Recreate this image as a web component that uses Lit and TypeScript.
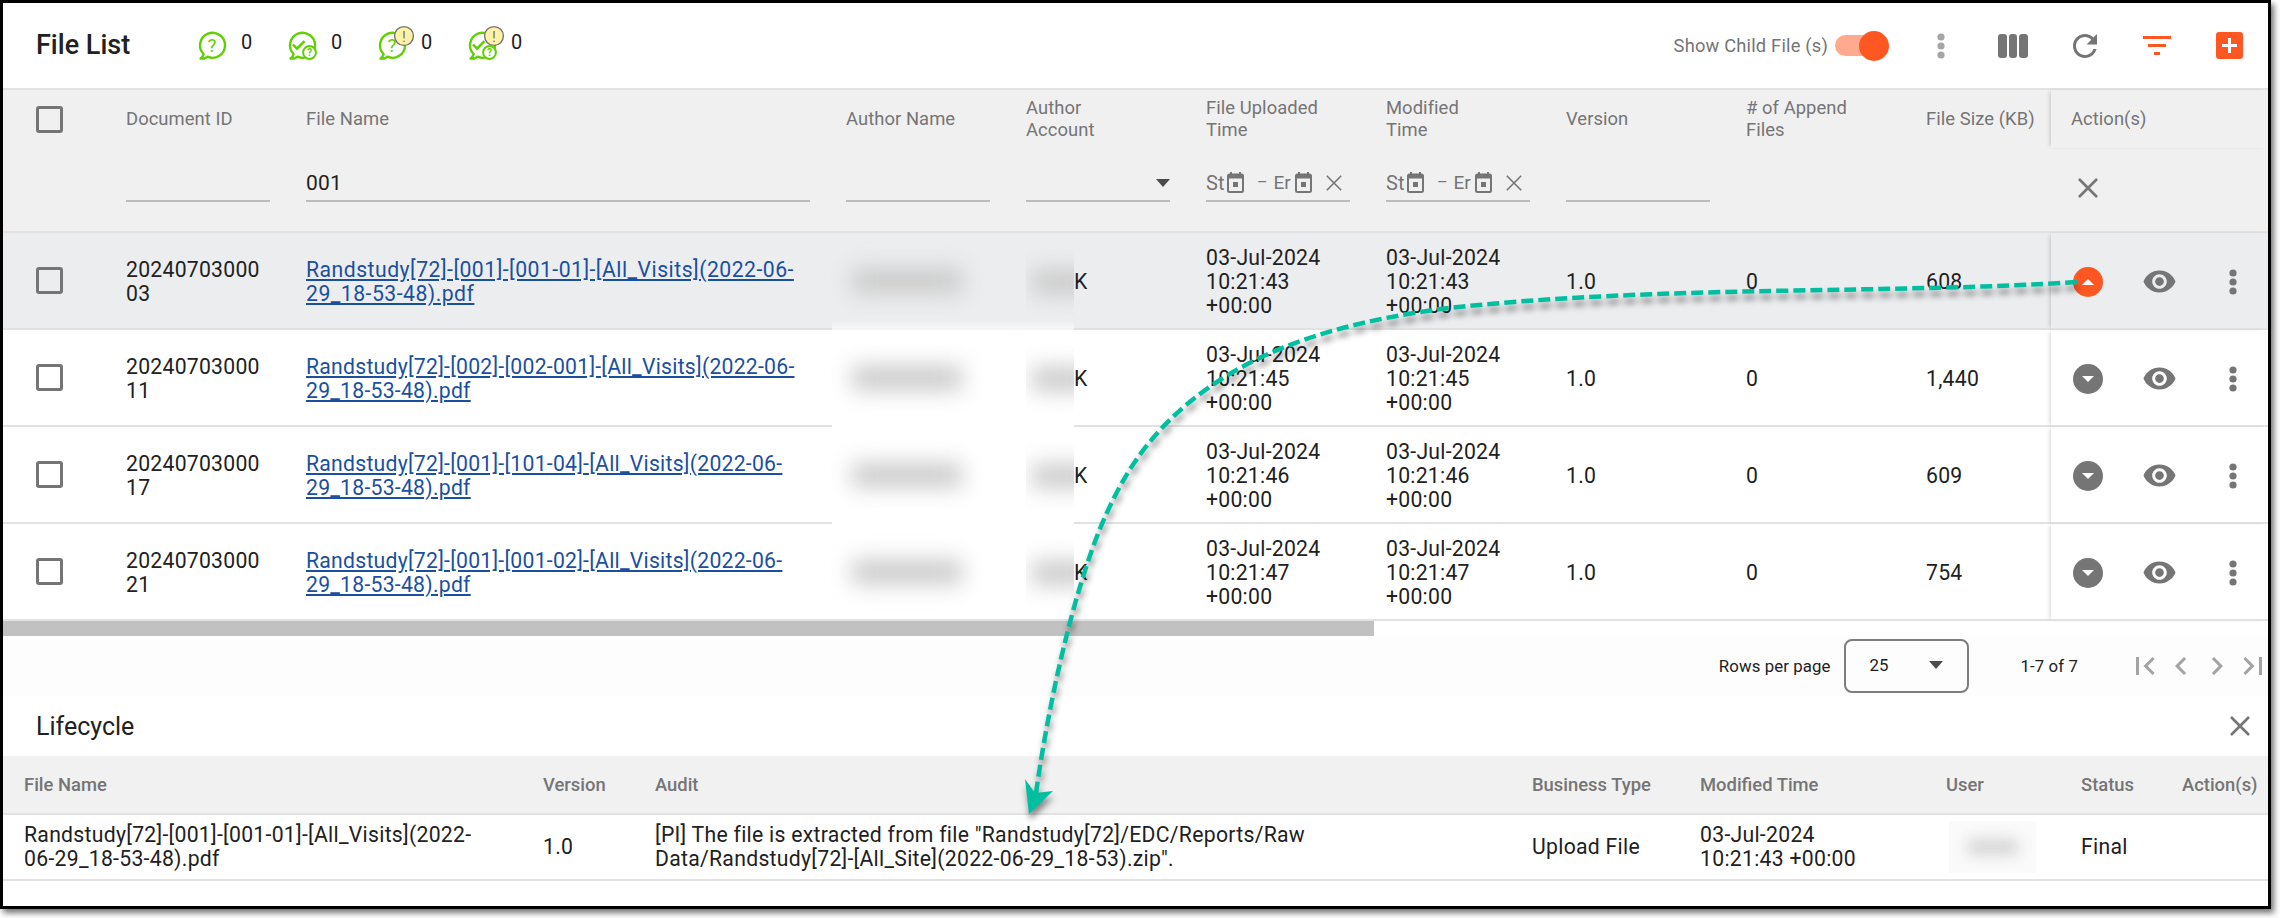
import { LitElement, html, svg, css } from "lit";
import { customElement } from "lit/decorators.js";

const GREEN = "#5fd000";

const PATHS = {
  refresh:
    "M17.65 6.35C16.2 4.9 14.21 4 12 4c-4.42 0-7.99 3.58-7.99 8s3.57 8 7.99 8c3.73 0 6.84-2.55 7.73-6h-2.08c-.82 2.33-3.04 4-5.65 4-3.31 0-6-2.69-6-6s2.69-6 6-6c1.66 0 3.14.69 4.22 1.78L13 11h7V4l-2.35 2.35z",
  eye: "M12 4.5C7 4.5 2.73 7.61 1 12c1.73 4.39 6 7.5 11 7.5s9.27-3.11 11-7.5c-1.73-4.39-6-7.5-11-7.5zM12 17c-2.76 0-5-2.24-5-5s2.24-5 5-5 5 2.24 5 5-2.24 5-5 5zm0-8c-1.66 0-3 1.34-3 3s1.34 3 3 3 3-1.34 3-3-1.34-3-3-3z",
  first: "M18.41 16.59L13.82 12l4.59-4.59L17 6l-6 6 6 6zM6 6h2v12H6z",
  prev: "M15.41 7.41L14 6l-6 6 6 6 1.41-1.41L10.83 12z",
  next: "M10 6L8.59 7.41 13.17 12l-4.58 4.59L10 18l6-6z",
  last: "M5.59 7.41L10.18 12l-4.59 4.59L7 18l6-6-6-6zM16 6h2v12h-2z",
};

const mat = (d: string, size: number, fill = "#757575") => html`
  <svg width=${size} height=${size} viewBox="0 0 24 24"><path d=${d} fill=${fill}></path></svg>
`;

// chat bubble with the question mark, optional check + small ? and warning badge
const bubble = (checked: boolean, warn: boolean) => html`
  <svg class="bubble" width="32" height="32" viewBox="0 0 32 32">
    <path
      d="M7.6 24A12.5 12.5 0 1 1 11.5 26.7L8.5 28.5H4.5Q7 27 7.6 24Z"
      fill="#fff"
      stroke=${GREEN}
      stroke-width="2.4"
      stroke-linejoin="round"
    ></path>
    ${checked
      ? svg`
        <path d="M7 14.5l4 4.2 7.5-7.5" fill="none" stroke=${GREEN} stroke-width="2.5"></path>
        <circle cx="23.5" cy="22.5" r="6.4" fill="#fff" stroke=${GREEN} stroke-width="2"></circle>
        <text x="23.5" y="26.3" font-size="10.5" font-weight="700" text-anchor="middle" fill=${GREEN} font-family="Roboto">?</text>`
      : svg`<text x="16" y="22" font-size="19" text-anchor="middle" fill=${GREEN} font-family="Roboto">?</text>`}
    ${warn
      ? svg`
        <circle cx="28" cy="6" r="9.4" fill="#fff2a6" stroke="#757575" stroke-width="1.4"></circle>
        <text x="28" y="11.5" font-size="15" text-anchor="middle" fill="#757575" font-family="Roboto">!</text>`
      : ""}
  </svg>
`;

const calendar = html`
  <svg class="cal" width="17" height="21" viewBox="0 0 17 21">
    <path d="M4 0v3M13 0v3" stroke="#757575" stroke-width="2"></path>
    <rect x="1" y="2.5" width="15" height="17.5" rx="1.5" fill="none" stroke="#757575" stroke-width="2"></rect>
    <rect x="1" y="2.5" width="15" height="4" fill="#757575"></rect>
    <rect x="6" y="10" width="5" height="5" fill="#757575"></rect>
  </svg>
`;

const cross = (size: number, width = 2.4) => html`
  <svg width=${size} height=${size} viewBox="0 0 20 20">
    <path d="M1 1L19 19M19 1L1 19" stroke="#757575" stroke-width=${width} fill="none"></path>
  </svg>
`;

const dots = (fill: string) => html`
  <svg width="8" height="26" viewBox="0 0 8 26">
    <circle cx="4" cy="4" r="3.6" fill=${fill}></circle>
    <circle cx="4" cy="13" r="3.6" fill=${fill}></circle>
    <circle cx="4" cy="22" r="3.6" fill=${fill}></circle>
  </svg>
`;

const FILES = [
  { id: "2024070300003", name: "Randstudy[72]-[001]-[001-01]-[All_Visits](2022-06-29_18-53-48).pdf", time: "10:21:43", size: "608" },
  { id: "2024070300011", name: "Randstudy[72]-[002]-[002-001]-[All_Visits](2022-06-29_18-53-48).pdf", time: "10:21:45", size: "1,440" },
  { id: "2024070300017", name: "Randstudy[72]-[001]-[101-04]-[All_Visits](2022-06-29_18-53-48).pdf", time: "10:21:46", size: "609" },
  { id: "2024070300021", name: "Randstudy[72]-[001]-[001-02]-[All_Visits](2022-06-29_18-53-48).pdf", time: "10:21:47", size: "754" },
];

@customElement("app-root")
export class AppRoot extends LitElement {
  static styles = css`
    :host {
      display: block;
      position: relative;
      width: 2280px;
      height: 918px;
      background: #fff;
      font-family: Roboto, "Liberation Sans", sans-serif;
      color: #212121;
      overflow: hidden;
    }

    .frame {
      width: 2271px;
      height: 909px;
      box-sizing: border-box;
      border: 3px solid #000;
      background: #fff;
      box-shadow: 3px 4px 6px rgba(0, 0, 0, 0.55);
      display: flex;
      flex-direction: column;
      position: relative;
      overflow: hidden;
    }

    /* Top bar */

    .topbar {
      height: 87px;
      box-sizing: border-box;
      border-bottom: 2px solid #e2e2e2;
      display: flex;
      align-items: center;
      padding: 0 21px 0 33px;
    }

    .title {
      width: 160px;
      font-size: 27px;
      font-weight: 500;
      position: relative;
      top: -1px;
    }

    .counter {
      width: 90px;
      display: flex;
      align-items: flex-start;
      gap: 13px;
      font-size: 20px;
      line-height: 24px;
      height: 32px;
    }

    .bubble {
      overflow: visible;
    }

    .tools {
      margin-left: auto;
      display: flex;
      align-items: center;
    }

    .child-label {
      font-size: 18.3px;
      color: #757575;
      letter-spacing: 0.2px;
      margin-right: 7px;
    }

    .toggle {
      position: relative;
      width: 54px;
      height: 21px;
      margin-right: -2px;
    }

    .toggle .track {
      width: 50px;
      height: 21px;
      border-radius: 11px;
      background: #ffa98f;
    }

    .toggle .thumb {
      position: absolute;
      right: 0;
      top: -4.5px;
      width: 30px;
      height: 30px;
      border-radius: 50%;
      background: #ff5722;
    }

    .tool {
      width: 36px;
      height: 36px;
      display: flex;
      align-items: center;
      justify-content: center;
      margin-left: 36px;
    }

    .bars {
      display: flex;
      gap: 2px;
    }

    .bars i {
      width: 8.6px;
      height: 24px;
      border-radius: 3px;
      background: #757575;
    }

    .filter-icon {
      display: flex;
      flex-direction: column;
      align-items: center;
      gap: 5px;
    }

    .filter-icon i {
      height: 3px;
      background: #ff5722;
    }

    .add {
      width: 27px;
      height: 27px;
      border-radius: 3px;
      background: #ff5722;
      display: flex;
      align-items: center;
      justify-content: center;
    }

    /* File table */

    .table {
      position: relative;
    }

    .cols {
      display: grid;
      grid-template-columns: 103px 180px 540px repeat(6, 180px) 145px 217px;
    }

    .cell {
      padding: 0 20px;
      box-sizing: border-box;
      display: flex;
      align-items: center;
      min-width: 0;
    }

    .head {
      background: #f0f0f1;
    }

    .labels .cell {
      height: 58px;
      font-size: 18.4px;
      line-height: 22px;
      letter-spacing: 0.06px;
      color: #757575;
      padding-right: 0;
      white-space: nowrap;
    }

    .filters {
      border-bottom: 2px solid #e2e2e2;
    }

    .filters .cell {
      height: 83px;
      align-items: flex-end;
      padding: 0 16px 29px 20px;
    }

    .field {
      width: 100%;
      height: 40px;
      box-sizing: border-box;
      border-bottom: 2px solid #bcbcbc;
      padding-top: 3px;
      display: flex;
      align-items: center;
      font-size: 21px;
      letter-spacing: 0.25px;
    }

    .caret {
      margin-left: auto;
      width: 0;
      height: 0;
      border-left: 7.5px solid transparent;
      border-right: 7.5px solid transparent;
      border-top: 8px solid #4a4a4a;
    }

    .date {
      font-size: 20px;
      color: #757575;
      letter-spacing: 0;
    }

    .date-part {
      display: block;
      white-space: nowrap;
      width: 21px;
    }

    .date-part.end {
      width: 18px;
      margin-right: 2px;
      font-size: 19px;
    }

    .date .x {
      margin-left: auto;
      display: flex;
      margin-right: 8px;
    }

    .dash {
      margin: 0 6px 0 13px;
      font-size: 16px;
    }

    .checkbox {
      width: 27px;
      height: 27px;
      box-sizing: border-box;
      border: 3px solid #757575;
      border-radius: 3px;
    }

    .check-cell {
      padding-left: 33px;
    }

    .row {
      height: 97px;
      box-sizing: border-box;
      border-bottom: 2px solid #e2e2e2;
      font-size: 21.2px;
      line-height: 24.2px;
      letter-spacing: 0.25px;
    }

    .row.active {
      background: #ecedef;
    }

    .row .cell {
      height: 95px;
    }

    .row .text {
      padding-top: 3px;
    }

    .wrap-id {
      word-break: break-all;
    }

    a {
      color: #1b4f9f;
      text-decoration: underline;
    }

    .active a {
      letter-spacing: 0.48px;
    }

    .sticky {
      box-shadow: -3px 0 4px -2px rgba(0, 0, 0, 0.18);
    }

    .filters .sticky {
      box-shadow: none;
      padding-left: 27px;
      padding-bottom: 33px;
    }

    .row .sticky {
      padding: 0;
      height: 97px;
    }

    .expand {
      width: 30px;
      height: 30px;
      border-radius: 50%;
      background: #757575;
      display: flex;
      align-items: center;
      justify-content: center;
      margin-left: 22px;
    }

    .active .expand {
      background: #ff5722;
    }

    .expand i {
      width: 0;
      height: 0;
      border-left: 6px solid transparent;
      border-right: 6px solid transparent;
      border-top: 6px solid #fff;
    }

    .active .expand i {
      border-top: 0;
      border-bottom: 6px solid #fff;
    }

    .eye {
      display: flex;
      margin-left: 39px;
    }

    .more {
      display: flex;
      margin-left: 52px;
    }

    /* Redacted names */

    .patch {
      position: absolute;
      left: 829px;
      top: 230px;
      width: 242px;
      height: 274px;
      background: linear-gradient(rgba(255, 255, 255, 0), #fff 14px);
      z-index: 1;
    }

    .blur-name {
      width: 110px;
      height: 24px;
      margin-left: 6px;
      background: #c9c9c9;
      filter: blur(11px);
      position: relative;
      z-index: 2;
    }

    .account-clip {
      width: 48px;
      height: 70px;
      overflow: hidden;
      flex: none;
      position: relative;
      z-index: 2;
      display: flex;
      align-items: center;
    }

    .account-clip i {
      display: block;
      width: 60px;
      height: 24px;
      margin-left: 6px;
      flex: none;
      background: #c9c9c9;
      filter: blur(11px);
    }

    .blur-user {
      width: 87px;
      height: 52px;
      background: #fafafa;
      margin-left: 3px;
      display: flex;
      align-items: center;
      justify-content: center;
    }

    .blur-user i {
      width: 50px;
      height: 16px;
      background: #d6d6d6;
      filter: blur(7px);
    }

    /* Scrollbar and pagination */

    .scrollbar {
      height: 15px;
      background: #fff;
    }

    .scrollbar i {
      display: block;
      width: 1371px;
      height: 15px;
      background: #c1c1c1;
    }

    .pagination {
      height: 60px;
      background: #fdfdfd;
      display: flex;
      align-items: center;
      justify-content: flex-end;
      margin-right: -3px;
      font-size: 16.8px;
      letter-spacing: 0.1px;
    }

    .rows-select {
      width: 125px;
      height: 54px;
      box-sizing: border-box;
      border: 2px solid #7d7d7d;
      border-radius: 8px;
      margin: 0 52px 0 13px;
      padding: 0 24px 2px;
      display: flex;
      align-items: center;
    }

    .pager {
      display: flex;
      margin-left: 49px;
    }

    .pager svg {
      display: block;
    }

    /* Lifecycle panel */

    .lifecycle {
      flex: 1;
      background: #fff;
      border-top-left-radius: 12px;
    }

    .life-title {
      height: 60px;
      display: flex;
      align-items: center;
      justify-content: space-between;
      padding: 0 18px 0 33px;
      font-size: 25px;
    }

    .life-cols {
      display: grid;
      grid-template-columns: 519px 112px 877px 168px 246px 135px 101px 107px;
    }

    .life-head {
      height: 59px;
      background: #f1f1f1;
      border-bottom: 2px solid #e2e2e2;
      box-sizing: border-box;
      font-size: 18.4px;
      font-weight: 500;
      color: #757575;
    }

    .life-head .cell,
    .life-row .cell {
      padding: 0 0 0 21px;
    }

    .life-row {
      height: 66px;
      border-bottom: 2px solid #e2e2e2;
      box-sizing: border-box;
      font-size: 21.2px;
      line-height: 24.2px;
      letter-spacing: 0.28px;
    }

    .life-row .name {
      padding-right: 40px;
    }

    /* Annotation arrow */

    .arrow {
      position: absolute;
      left: 0;
      top: 0;
      z-index: 5;
      pointer-events: none;
      filter: drop-shadow(1px 6px 3px rgba(0, 0, 0, 0.45));
    }
  `;

  renderTopbar() {
    return html`
      <div class="topbar">
        <div class="title">File List</div>
        <div class="counter">${bubble(false, false)}<span>0</span></div>
        <div class="counter">${bubble(true, false)}<span>0</span></div>
        <div class="counter">${bubble(false, true)}<span>0</span></div>
        <div class="counter">${bubble(true, true)}<span>0</span></div>
        <div class="tools">
          <div class="child-label">Show Child File (s)</div>
          <div class="toggle"><div class="track"></div><div class="thumb"></div></div>
          <div class="tool">${dots("#a6a6a6")}</div>
          <div class="tool"><div class="bars"><i></i><i></i><i></i></div></div>
          <div class="tool">${mat(PATHS.refresh, 36)}</div>
          <div class="tool">
            <div class="filter-icon">
              <i style="width:28px"></i><i style="width:18px"></i><i style="width:6px"></i>
            </div>
          </div>
          <div class="tool">
            <div class="add">
              <svg width="15" height="15" viewBox="0 0 15 15">
                <path d="M7.5 0v15M0 7.5h15" stroke="#fff" stroke-width="3"></path>
              </svg>
            </div>
          </div>
        </div>
      </div>
    `;
  }

  renderDateFilter() {
    return html`
      <div class="field date">
        <span class="date-part">St</span>${calendar}
        <span class="dash">–</span>
        <span class="date-part end">Er</span>
        <span style="margin-left:1px;display:flex">${calendar}</span>
        <span class="x">${cross(16, 2)}</span>
      </div>
    `;
  }

  renderHead() {
    return html`
      <div class="head">
        <div class="cols labels">
          <div class="cell check-cell"><div class="checkbox"></div></div>
          <div class="cell">Document ID</div>
          <div class="cell">File Name</div>
          <div class="cell">Author Name</div>
          <div class="cell">Author<br />Account</div>
          <div class="cell">File Uploaded<br />Time</div>
          <div class="cell">Modified<br />Time</div>
          <div class="cell">Version</div>
          <div class="cell"><div># of Append<br />Files</div></div>
          <div class="cell">File Size (KB)</div>
          <div class="cell sticky">Action(s)</div>
        </div>
        <div class="cols filters">
          <div class="cell"></div>
          <div class="cell"><div class="field"></div></div>
          <div class="cell"><div class="field">001</div></div>
          <div class="cell"><div class="field"></div></div>
          <div class="cell"><div class="field"><i class="caret"></i></div></div>
          <div class="cell">${this.renderDateFilter()}</div>
          <div class="cell">${this.renderDateFilter()}</div>
          <div class="cell"><div class="field"></div></div>
          <div class="cell"></div>
          <div class="cell"></div>
          <div class="cell sticky">${cross(20, 2.6)}</div>
        </div>
      </div>
    `;
  }

  renderRow(f: (typeof FILES)[number], i: number) {
    const date = html`03-Jul-2024<br />${f.time}<br />+00:00`;
    return html`
      <div class="cols row ${i === 0 ? "active" : ""}">
        <div class="cell check-cell"><div class="checkbox"></div></div>
        <div class="cell text"><div class="wrap-id">${f.id}</div></div>
        <div class="cell text" style="padding-right:16px"><div><a href="#">${f.name}</a></div></div>
        <div class="cell"><div class="blur-name"></div></div>
        <div class="cell text"><div class="account-clip"><i></i></div><span>K</span></div>
        <div class="cell text"><div>${date}</div></div>
        <div class="cell text"><div>${date}</div></div>
        <div class="cell text">1.0</div>
        <div class="cell text">0</div>
        <div class="cell text">${f.size}</div>
        <div class="cell sticky">
          <div class="expand"><i></i></div>
          <span class="eye">${mat(PATHS.eye, 35)}</span>
          <span class="more">${dots("#757575")}</span>
        </div>
      </div>
    `;
  }

  renderPagination() {
    return html`
      <div class="pagination">
        <span>Rows per page</span>
        <div class="rows-select"><span>25</span><i class="caret"></i></div>
        <span>1-7 of 7</span>
        <div class="pager">
          ${mat(PATHS.first, 36, "#a3a3a3")} ${mat(PATHS.prev, 36, "#a3a3a3")}
          ${mat(PATHS.next, 36, "#a3a3a3")} ${mat(PATHS.last, 36, "#a3a3a3")}
        </div>
      </div>
    `;
  }

  renderLifecycle() {
    return html`
      <div class="lifecycle">
        <div class="life-title"><span>Lifecycle</span>${cross(20, 2.6)}</div>
        <div class="life-cols life-head">
          <div class="cell">File Name</div>
          <div class="cell">Version</div>
          <div class="cell">Audit</div>
          <div class="cell">Business Type</div>
          <div class="cell">Modified Time</div>
          <div class="cell">User</div>
          <div class="cell">Status</div>
          <div class="cell">Action(s)</div>
        </div>
        <div class="life-cols life-row">
          <div class="cell name"><div>Randstudy[72]-[001]-[001-01]-[All_Visits](2022-06-29_18-53-48).pdf</div></div>
          <div class="cell">1.0</div>
          <div class="cell">
            <div>
              [PI] The file is extracted from file "Randstudy[72]/EDC/Reports/Raw<br />
              Data/Randstudy[72]-[All_Site](2022-06-29_18-53).zip".
            </div>
          </div>
          <div class="cell">Upload File</div>
          <div class="cell"><div>03-Jul-2024<br />10:21:43 +00:00</div></div>
          <div class="cell"><div class="blur-user"><i></i></div></div>
          <div class="cell">Final</div>
          <div class="cell"></div>
        </div>
      </div>
    `;
  }

  render() {
    return html`
      <div class="frame">
        ${this.renderTopbar()}
        <div class="table">
          ${this.renderHead()} ${FILES.map((f, i) => this.renderRow(f, i))}
          <div class="patch"></div>
        </div>
        <div class="scrollbar"><i></i></div>
        ${this.renderPagination()} ${this.renderLifecycle()}
      </div>
      <svg class="arrow" width="2280" height="918" viewBox="0 0 2280 918">
        <path
          d="M2077 282C1900 294 1660 285 1449 308C1330 323 1180 360 1113 500C1082 560 1052 680 1036 793"
          fill="none"
          stroke="#00bfa0"
          stroke-width="4.5"
          stroke-dasharray="12 5"
        ></path>
        <path d="M1029 814L1025 779L1035 793L1053 791Z" fill="#00bfa0"></path>
      </svg>
    `;
  }
}
